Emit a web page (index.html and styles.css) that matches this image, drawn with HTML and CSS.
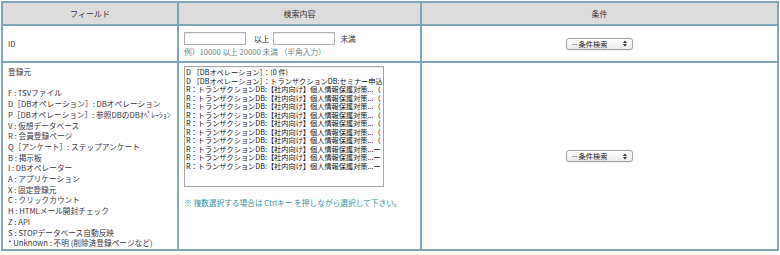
FILE: index.html
```html
<!DOCTYPE html>
<html lang="ja">
<head>
  <meta charset="UTF-8">
  <title>検索条件</title>
  <link rel="stylesheet" href="styles.css">
</head>
<body>
  <div class="search-wrap">
    <table class="search-table">
      <colgroup>
        <col class="col-field">
        <col class="col-value">
        <col class="col-cond">
      </colgroup>
      <thead>
        <tr class="head-row">
          <th>フィールド</th>
          <th>検索内容</th>
          <th>条件</th>
        </tr>
      </thead>
      <tbody>
        <!-- ID -->
        <tr class="row-id">
          <td class="field">ID</td>
          <td class="value">
            <div class="range">
              <input type="text" class="text-input">
              <span class="range-label">以上</span>
              <input type="text" class="text-input">
              <span class="range-label last">未満</span>
            </div>
            <div class="hint">例）10000 以上 20000 未満 （半角入力）</div>
          </td>
          <td class="cond">
            <div class="fake-select">
              <span>-- 条件検索</span>
              <svg class="arrows" width="4" height="7" viewBox="0 0 4 7">
                <path d="M0 3 L2 0.5 L4 3 Z M0 4 L2 6.5 L4 4 Z" fill="#333"/>
              </svg>
            </div>
          </td>
        </tr>
        <!-- 登録元 -->
        <tr class="row-source">
          <td class="field top">
            <div class="source-list">
              登録元<br><br>
              F : TSVファイル<br>
              D［DBオペレーション］: DBオペレーション<br>
              P［DBオペレーション］: 参照DBのDBｵﾍﾟﾚｰｼｮﾝ<br>
              V : 仮想データベース<br>
              R : 会員登録ページ<br>
              Q［アンケート］: ステップアンケート<br>
              B : 掲示板<br>
              I : DBオペレーター<br>
              A : アプリケーション<br>
              X : 固定登録元<br>
              C : クリックカウント<br>
              H : HTMLメール開封チェック<br>
              Z : API<br>
              S : STOPデータベース自動反映<br>
              * Unknown : 不明 (削除済登録ページなど)
            </div>
          </td>
          <td class="value top">
            <div class="listbox">
              <div class="opt">D ［DBオペレーション］：(0 件)</div>
              <div class="opt">D ［DBオペレーション］：トランザクションDB:セミナー申込フォーム</div>
              <div class="opt">R：トランザクションDB:【社内向け】個人情報保護対策...（</div>
              <div class="opt">R：トランザクションDB:【社内向け】個人情報保護対策...（</div>
              <div class="opt">R：トランザクションDB:【社内向け】個人情報保護対策...（</div>
              <div class="opt">R：トランザクションDB:【社内向け】個人情報保護対策...（</div>
              <div class="opt">R：トランザクションDB:【社内向け】個人情報保護対策...（</div>
              <div class="opt">R：トランザクションDB:【社内向け】個人情報保護対策...（</div>
              <div class="opt">R：トランザクションDB:【社内向け】個人情報保護対策...（</div>
              <div class="opt">R：トランザクションDB:【社内向け】個人情報保護対策...ー</div>
              <div class="opt">R：トランザクションDB:【社内向け】個人情報保護対策...ー</div>
              <div class="opt">R：トランザクションDB:【社内向け】個人情報保護対策...ー</div>
            </div>
            <div class="note">※ 複数選択する場合は Ctrlキー を押しながら選択して下さい。</div>
          </td>
          <td class="cond">
            <div class="fake-select">
              <span>-- 条件検索</span>
              <svg class="arrows" width="4" height="7" viewBox="0 0 4 7">
                <path d="M0 3 L2 0.5 L4 3 Z M0 4 L2 6.5 L4 4 Z" fill="#333"/>
              </svg>
            </div>
          </td>
        </tr>
      </tbody>
    </table>
  </div>
</body>
</html>
```

FILE: styles.css
```css
/* 基本 */
:root {
  --border-color: #7fa5b9;
  --head-bg: #dcdcdc;
  --text-color: #3a3440;
  --hint-color: #65848f;
  --note-color: #3f8f9b;
  --font-family: "Noto Sans CJK JP", "DejaVu Sans", sans-serif;
}
* {
  box-sizing: border-box;
}
body {
  margin: 0;
  background: #fff;
  font-family: var(--font-family);
  color: var(--text-color);
  font-size: 7.7px;
}
.search-wrap {
  padding: 1px;
}
/* テーブル */
.search-table {
  width: 776px;
  table-layout: fixed;
  border-collapse: collapse;
}
.col-field { width: 176px; }
.col-value { width: 243px; }
.col-cond { width: 357px; }
.search-table th,
.search-table td {
  border: 2px solid var(--border-color);
  padding: 0;
}
.search-table th {
  background: var(--head-bg);
  font-weight: normal;
  font-size: 8px;
  color: #333;
  height: 23px;
  text-align: center;
}
.row-id td {
  height: 37px;
  vertical-align: middle;
}
.row-source td {
  height: 188px;
  vertical-align: middle;
}
.row-source td.top {
  vertical-align: top;
}
td.field {
  padding-left: 5px;
}
td.value {
  padding-left: 5px;
}
td.cond {
  text-align: center;
}
/* ID 範囲 */
.range {
  display: flex;
  align-items: center;
  height: 13px;
  margin-top: 2px;
}
.text-input {
  width: 62px;
  height: 13px;
  border: 1px solid #b0b0b0;
  box-shadow: inset 0 1px 1px rgba(0,0,0,0.08);
  padding: 0;
  margin: 0;
}
.range-label {
  margin: 0 4px 0 8px;
  color: #333;
}
.range-label.last {
  margin-left: 5px;
}
.hint {
  color: var(--hint-color);
  margin-top: 2px;
  line-height: 10px;
}
/* 登録元 */
.source-list {
  padding-top: 4px;
  line-height: 10.7px;
  color: var(--text-color);
}
.listbox {
  margin-top: 3px;
  width: 200px;
  height: 121px;
  border: 1px solid #a6a6a6;
  box-shadow: inset 0 1px 1px rgba(0,0,0,0.06);
  overflow: hidden;
  padding: 1px 0 0 1px;
}
.opt {
  white-space: nowrap;
  overflow: hidden;
  font-size: 7.2px;
  line-height: 8.5px;
  height: 8.5px;
  color: #111;
}
.note {
  margin-top: 10px;
  color: var(--note-color);
}
/* 条件セレクト */
.fake-select {
  display: inline-flex;
  align-items: center;
  justify-content: space-between;
  width: 67px;
  height: 12px;
  padding: 0 5px 0 5px;
  border: 1px solid #a0a0a0;
  border-radius: 3px;
  background: linear-gradient(#ffffff, #ececec);
  box-shadow: 0 1px 0 rgba(0,0,0,0.05);
  font-size: 7.2px;
  color: #222;
  vertical-align: middle;
}
.arrows {
  display: block;
}
```
